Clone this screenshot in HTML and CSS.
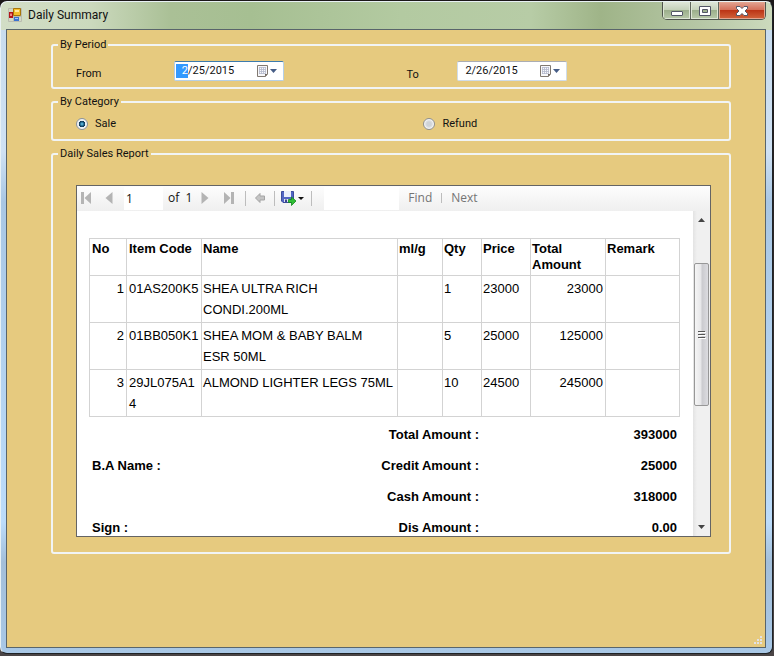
FILE: index.html
```html
<!DOCTYPE html>
<html lang="en">
<head>
<meta charset="utf-8">
<title>Daily Summary</title>
<link rel="stylesheet" href="styles.css">
</head>
<body>
<main class="window">
  <header class="titlebar">
    <svg class="app-icon" width="14" height="14" viewBox="0 0 14 14" aria-hidden="true">
      <path d="M.5 .5H13.500V13.500H.5ZM.5 8.500H13.500M5.500 .5V13.500" fill="#d3d9c6" stroke="#b9bdb0"/>
      <path d="M1 4H5V10H1Z" fill="#b3141a"/><path d="M2 5.500H4V8H2Z" fill="#f08a84"/>
      <path d="M5.500 .5H12.500V7.500H5.500Z" fill="#f5c02e" stroke="#a8760a"/><path d="M7 2H11V4H7Z" fill="#ffeaa0"/>
      <path d="M6 9H11V13H6Z" fill="#3b74d0"/><path d="M7 10H10V11H7Z" fill="#a5c8fa"/>
    </svg>
    <h1 class="title">Daily Summary</h1>
    <div class="caption-buttons">
      <button class="caption" type="button" aria-label="Minimize">
        <svg width="14" height="14" viewBox="0 0 14 14"><rect x="1.500" y="7.500" width="11" height="4" rx=".5" fill="#fff" stroke="#535666"/></svg>
      </button>
      <button class="caption" type="button" aria-label="Maximize">
        <svg width="14" height="14" viewBox="0 0 14 14"><path d="M1.500 2.500H12.500V11.500H1.500ZM4.500 5.500V8.500H9.500V5.500Z" fill="#fff" fill-rule="evenodd" stroke="#535666"/></svg>
      </button>
      <button class="caption caption-close" type="button" aria-label="Close">
        <svg width="14" height="14" viewBox="0 0 14 14"><path d="M1.500 2.500H5L7 4.500L9 2.500H12.500V4.500L10 7L12.500 9.500V11.500H9L7 9.500L5 11.500H1.500V9.500L4 7L1.500 4.500Z" fill="#fff" stroke="#535666"/></svg>
      </button>
    </div>
  </header>

  <form class="client">
    <fieldset class="group period">
      <legend>By Period</legend>
      <label for="from">From</label>
      <div class="date date-active">
        <span class="date-part">2</span><input id="from" type="text" value="/25/2015">
        <button class="date-button" type="button" aria-label="Open calendar">
          <svg width="22" height="14" viewBox="0 0 22 14"><path d="M.5 1.500H10.500V10L8.500 12.500H.5Z" fill="#f8f8fa" stroke="#807870"/><path d="M2 3.500H9M2 5.500H9M2 7.500H9M2 9.500H8M2.500 3V10M4.500 3V10M6.500 3V10M8.500 3V10" stroke="#b4b9cb" stroke-width=".8"/><path d="M8 12.500V10H10.500Z" fill="#6b625c"/><path d="M13 5H20L16.500 9Z" fill="#465d86"/></svg>
        </button>
      </div>
      <label class="to-label" for="to">To</label>
      <div class="date">
        <input id="to" type="text" value="2/26/2015">
        <button class="date-button" type="button" aria-label="Open calendar">
          <svg width="22" height="14" viewBox="0 0 22 14"><path d="M.5 1.500H10.500V10L8.500 12.500H.5Z" fill="#f8f8fa" stroke="#807870"/><path d="M2 3.500H9M2 5.500H9M2 7.500H9M2 9.500H8M2.500 3V10M4.500 3V10M6.500 3V10M8.500 3V10" stroke="#b4b9cb" stroke-width=".8"/><path d="M8 12.500V10H10.500Z" fill="#6b625c"/><path d="M13 5H20L16.500 9Z" fill="#465d86"/></svg>
        </button>
      </div>
    </fieldset>

    <fieldset class="group category">
      <legend>By Category</legend>
      <label class="choice"><input type="radio" name="category" checked>Sale</label>
      <label class="choice"><input type="radio" name="category">Refund</label>
    </fieldset>

    <fieldset class="group report">
      <legend>Daily Sales Report</legend>
      <section class="viewer">
        <div class="toolbar">
          <button class="tool" type="button" aria-label="First page"><svg width="12" height="14" viewBox="0 0 12 14"><path d="M1 1H4V13H1ZM11 1V13L4.500 7Z" fill="#b4b4b4"/></svg></button>
          <button class="tool" type="button" aria-label="Previous page"><svg width="12" height="14" viewBox="0 0 12 14"><path d="M9.500 1V13L2.500 7Z" fill="#b4b4b4"/></svg></button>
          <input class="page-box" type="text" value="1" aria-label="Page">
          <span class="page-count">of&nbsp; 1</span>
          <button class="tool" type="button" aria-label="Next page"><svg width="12" height="14" viewBox="0 0 12 14"><path d="M2.500 1V13L9.500 7Z" fill="#b4b4b4"/></svg></button>
          <button class="tool" type="button" aria-label="Last page"><svg width="12" height="14" viewBox="0 0 12 14"><path d="M1 1L7.500 7L1 13ZM8 1H11V13H8Z" fill="#b4b4b4"/></svg></button>
          <span class="divider"></span>
          <button class="tool tool-back" type="button" aria-label="Back"><svg width="12" height="14" viewBox="0 0 12 14"><path d="M1.500 7L6 2.500V5H10.500V9H6V11.500Z" fill="#c4c4c4" stroke="#a4a4a4"/></svg></button>
          <span class="divider"></span>
          <button class="tool tool-save" type="button" aria-label="Export">
            <svg width="24" height="16" viewBox="0 0 24 16"><path d="M.5 1.500H12.500V12.500H2L.5 11Z" fill="#5165c4" stroke="#3c4c9c"/><path d="M3 1H10V7H3Z" fill="#e9eefb"/><path d="M3 9H9V12H3Z" fill="#dfe3ee"/><path d="M4 9.500H6V12H4Z" fill="#39468c"/><path d="M7.500 9.500H10.500V7L15 11L10.500 15.500V12.500H7.500Z" fill="#2fbf35" stroke="#13851c" stroke-width=".8"/><path d="M17 7H23L20 10Z" fill="#111"/></svg>
          </button>
          <span class="divider"></span>
          <input class="find-box" type="text" aria-label="Find text">
          <button class="text-tool" type="button">Find</button>
          <span class="divider divider-short"></span>
          <button class="text-tool" type="button">Next</button>
        </div>
        <div class="document">
          <div class="page">
            <table class="sales">
              <colgroup><col class="c-no"><col class="c-code"><col class="c-name"><col class="c-ml"><col class="c-qty"><col class="c-price"><col class="c-total"><col class="c-remark"></colgroup>
              <thead>
                <tr><th>No</th><th>Item Code</th><th>Name</th><th>ml/g</th><th>Qty</th><th>Price</th><th>Total Amount</th><th>Remark</th></tr>
              </thead>
              <tbody>
                <tr><td class="num">1</td><td>01AS200K5</td><td>SHEA ULTRA RICH<br>CONDI.200ML</td><td></td><td>1</td><td>23000</td><td class="num">23000</td><td></td></tr>
                <tr><td class="num">2</td><td>01BB050K1</td><td>SHEA MOM &amp; BABY BALM<br>ESR 50ML</td><td></td><td>5</td><td>25000</td><td class="num">125000</td><td></td></tr>
                <tr><td class="num">3</td><td>29JL075A14</td><td>ALMOND LIGHTER LEGS 75ML</td><td></td><td>10</td><td>24500</td><td class="num">245000</td><td></td></tr>
              </tbody>
            </table>
            <table class="totals">
              <tbody>
                <tr><td></td><th scope="row">Total Amount :</th><td class="num">393000</td></tr>
                <tr><td>B.A Name :</td><th scope="row">Credit Amount :</th><td class="num">25000</td></tr>
                <tr><td></td><th scope="row">Cash Amount :</th><td class="num">318000</td></tr>
                <tr><td>Sign :</td><th scope="row">Dis Amount :</th><td class="num">0.00</td></tr>
              </tbody>
            </table>
          </div>
          <div class="scrollbar" aria-hidden="true">
            <svg class="arrow" width="7" height="4" viewBox="0 0 7 4"><path d="M0 4L3.500 0L7 4Z" fill="#444"/></svg>
            <div class="thumb"><svg width="8" height="8" viewBox="0 0 8 8"><path d="M0 .5H7M0 3.500H7M0 6.500H7" stroke="#555"/><path d="M1 1.500H8M1 4.500H8M1 7.500H8" stroke="#fff"/></svg></div>
            <svg class="arrow" width="7" height="4" viewBox="0 0 7 4"><path d="M0 0L3.500 4L7 0Z" fill="#444"/></svg>
          </div>
        </div>
      </section>
    </fieldset>
    <svg class="grip" width="9" height="9" viewBox="0 0 9 9" aria-hidden="true"><path d="M6 0H8V2H6ZM3 3H5V5H3ZM6 3H8V5H6ZM0 6H2V8H0ZM3 6H5V8H3ZM6 6H8V8H6Z" fill="#e2e2e6"/></svg>
  </form>
</main>
</body>
</html>
```
FILE: styles.css
```css
* { box-sizing: border-box; }

body {
  margin: 0;
  height: 100vh;
  padding: 1px 1px 2px 0;
  background: linear-gradient(#1b1718, #4a4546);
  font: 11px/14px Roboto, "Liberation Sans", sans-serif;
  color: #111;
}

button, input { font: inherit; color: inherit; margin: 0; padding: 0; border: 0; background: none; }
button { display: flex; align-items: center; justify-content: center; }
svg { display: block; }

.window {
  display: flex;
  flex-direction: column;
  height: 100%;
  padding: 0 6px 5px 5px;
  border: 1px solid #e8f1f4;
  border-right-color: #1e2226;
  border-bottom-color: #1e2226;
  border-radius: 7px;
  background:
    linear-gradient(90deg, #d2dec6 0, #cbd9bd 90px, #aac096 170px, #a6bf92 250px, #b3caa1 400px, #b7cca6 530px, #9fb488 600px, #b6c7a6 700px, #ccdabd) 0 0 / 100% 28px no-repeat,
    linear-gradient(#c8dcee 28px, #cfe1f3 150px, #a9c7e4 200px, #bcdcfa 520px, #a3bfda 560px, #a9c8e6);
}

.titlebar { display: flex; align-items: center; flex: none; height: 27px; padding: 0 0 1px 2px; }
.app-icon { flex: none; }
.title { flex: 1; margin: 0 0 0 6px; font: 12px/16px Roboto, "Liberation Sans", sans-serif; }

.caption-buttons {
  display: flex;
  align-self: flex-start;
  border: 1px solid #4f544d;
  border-top: 0;
  border-radius: 0 0 5px 5px;
  overflow: hidden;
}
.caption {
  width: 28px;
  height: 17px;
  border-right: 1px solid #5f665d;
  background: linear-gradient(#dfe6d9, #c2cfb6 50%, #9caf8c 50%, #b9c9a9);
  box-shadow: inset 0 0 0 1px #dde6d5;
}
.caption-close {
  width: 46px;
  border-right: 0;
  background: linear-gradient(#e2a493, #d4715a 45%, #bc3516 50%, #d2643c);
  box-shadow: inset 0 0 0 1px #e3a58f;
}

.client {
  position: relative;
  flex: 1;
  display: flex;
  flex-direction: column;
  gap: 6px;
  padding: 8px 34px 16px 44px;
  border: 1px solid #59656b;
  background: #e6ca7f;
}

.group {
  margin: 0;
  min-width: 0;
  padding: 0 18px 0 23px;
  border: 2px solid #f1f4f5;
  border-radius: 3px;
}
.group legend { margin-left: -18px; padding: 0 2px; }

.period {
  display: grid;
  grid-template-columns: 98fr 233fr 51fr 254fr;
  align-items: center;
  padding-top: 7px;
  padding-bottom: 5px;
}
.period label { padding-top: 6px; }
.period .to-label { padding-top: 9px; }

.date {
  display: flex;
  align-items: center;
  width: 110px;
  height: 20px;
  padding: 0 4px 0 7px;
  border: 1px solid #cfdcea;
  border-top-color: #abadb3;
  border-radius: 2px;
  background: #fff;
}
.date-active { padding-left: 1px; border-color: #b5cfe7; border-top-color: #3d7bad; }
.date-part { padding-left: 6px; background: #3399ff; color: #fff; }
.date input { flex: 1; min-width: 0; height: 14px; }

.category {
  display: grid;
  grid-template-columns: 348fr 288fr;
  padding-top: 8px;
  padding-bottom: 8px;
}
.choice { display: flex; align-items: center; gap: 7px; }
.choice input {
  appearance: none;
  width: 12px;
  height: 12px;
  border: 1px solid #8e8f8f;
  border-radius: 50%;
  background: radial-gradient(#cfd3d7 30%, #fff 90%);
  box-shadow: inset 0 0 0 1px #f4f4f4;
}
.choice input:checked { border-color: #8a949c; background: radial-gradient(circle at 50% 50%, #6fd0f2 0, #14577f 30%, #12354e 42%, #e8eef2 50%); }

.report { padding-top: 24px; padding-bottom: 15px; }

.viewer { border: 1px solid #646464; background: #fff; }

.toolbar {
  display: flex;
  align-items: center;
  height: 25px;
  padding: 0 0 1px 3px;
  background: linear-gradient(#fdfdfd, #efefef);
  font: 12px/16px "Open Sans", sans-serif;
}
.tool { width: 24px; }
.tool:first-child { justify-content: flex-start; width: 17px; }
.page-box { width: 39px; height: 23px; padding-left: 2px; margin-left: 3px; background: #fff; }
.page-count { margin: 0 1px 0 5px; }
.divider { width: 1px; height: 15px; margin: 0 4px; background: #bdbdbd; }
.divider-short { height: 10px; margin: 0 9px; }
.tool-back { width: 20px; }
.tool-save { width: 28px; }
.find-box { width: 75px; height: 23px; margin: 0 9px 0 8px; background: #fff; }
.text-tool { color: #747474; }

.document { display: flex; height: 325px; overflow: hidden; font: 13px/21px "Liberation Sans", Arial, sans-serif; color: #000; }
.page { flex: 1; min-width: 0; padding: 27px 13px 0 12px; }

table { width: 100%; border-collapse: collapse; table-layout: fixed; }
th, td { text-align: left; vertical-align: top; }
.num { text-align: right; }

.sales th, .sales td { border: 1px solid #d3d3d3; padding: 2px 2px 2px 1px; overflow-wrap: anywhere; }
.sales th { line-height: 16px; }
.sales td { line-height: 21px; }
.sales th:nth-child(-n+2), .sales td:nth-child(2) { padding-left: 2px; }
.sales th, .sales td:nth-child(2) { padding-right: 0; }
.c-no { width: 37px; }
.c-code { width: 75px; }
.c-ml { width: 45px; }
.c-qty { width: 39px; }
.c-price { width: 49px; }
.c-total { width: 75px; }
.c-remark { width: 74px; }

.totals { margin-top: 2px; font-weight: bold; line-height: 18px; }
.totals th, .totals td { height: 31px; padding: 7px 3px 0; }
.totals th { width: 180px; text-align: right; }
.totals td:last-child { width: 198px; }

.scrollbar {
  display: flex;
  flex-direction: column;
  align-items: center;
  width: 17px;
  padding: 7px 0;
  background: linear-gradient(90deg, #e3e3e3, #f0f0f0 4px);
}
.thumb {
  display: flex;
  align-items: center;
  justify-content: center;
  width: 15px;
  height: 143px;
  margin: 41px 0 auto;
  border: 1px solid #979797;
  border-radius: 2px;
  background: linear-gradient(90deg, #f5f5f5, #e6e6e8 48%, #cacace 52%, #dcdce0);
}

.grip { position: absolute; right: 2px; bottom: 2px; }
```
